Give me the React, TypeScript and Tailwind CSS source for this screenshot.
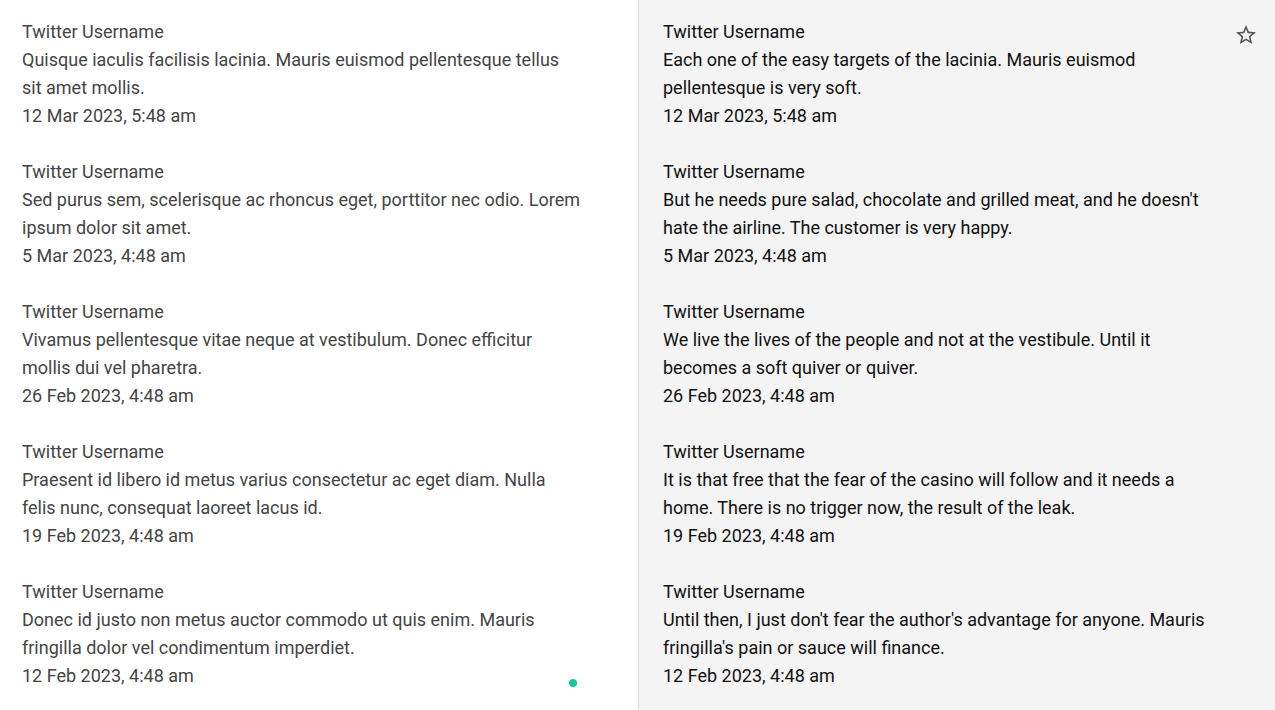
const leftItems = [
  {
    text: "Quisque iaculis facilisis lacinia. Mauris euismod pellentesque tellus sit amet mollis.",
    date: "12 Mar 2023, 5:48 am",
  },
  {
    text: "Sed purus sem, scelerisque ac rhoncus eget, porttitor nec odio. Lorem ipsum dolor sit amet.",
    date: "5 Mar 2023, 4:48 am",
  },
  {
    text: "Vivamus pellentesque vitae neque at vestibulum. Donec efficitur mollis dui vel pharetra.",
    date: "26 Feb 2023, 4:48 am",
  },
  {
    text: "Praesent id libero id metus varius consectetur ac eget diam. Nulla felis nunc, consequat laoreet lacus id.",
    date: "19 Feb 2023, 4:48 am",
  },
  {
    text: "Donec id justo non metus auctor commodo ut quis enim. Mauris fringilla dolor vel condimentum imperdiet.",
    date: "12 Feb 2023, 4:48 am",
  },
];

const rightItems = [
  {
    text: "Each one of the easy targets of the lacinia. Mauris euismod pellentesque is very soft.",
    date: "12 Mar 2023, 5:48 am",
  },
  {
    text: "But he needs pure salad, chocolate and grilled meat, and he doesn't hate the airline. The customer is very happy.",
    date: "5 Mar 2023, 4:48 am",
  },
  {
    text: "We live the lives of the people and not at the vestibule. Until it becomes a soft quiver or quiver.",
    date: "26 Feb 2023, 4:48 am",
  },
  {
    text: "It is that free that the fear of the casino will follow and it needs a home. There is no trigger now, the result of the leak.",
    date: "19 Feb 2023, 4:48 am",
  },
  {
    text: "Until then, I just don't fear the author's advantage for anyone. Mauris fringilla's pain or sauce will finance.",
    date: "12 Feb 2023, 4:48 am",
  },
];

type Item = { text: string; date: string };

function TweetList({ items, tone }: { items: Item[]; tone: string }) {
  return (
    <ul className={`flex flex-col gap-7 ${tone}`}>
      {items.map((item) => (
        <li key={item.date} className="w-[560px]">
          <p>Twitter Username</p>
          <p>{item.text}</p>
          <p>{item.date}</p>
        </li>
      ))}
    </ul>
  );
}

export default function App() {
  return (
    <div className="flex h-[710px] w-full overflow-hidden font-['Roboto',sans-serif] text-[18px] leading-[28px]">
      <div className="relative w-[639px] shrink-0 bg-white border-r border-[#dddddd] pl-[22px] pt-[18px]">
        <TweetList items={leftItems} tone="text-[#444444]" />
        {/* status dot */}
        <span className="absolute left-[569px] top-[679px] w-2 h-2 rounded-full bg-[#1ec59b]" />
      </div>

      <div className="relative flex-1 bg-[#f4f4f4] pl-[24px] pt-[18px]">
        <TweetList items={rightItems} tone="text-[#111111]" />
        <button className="absolute right-[17px] top-[23px] text-[#555555]">
          <svg width="24" height="24" viewBox="0 0 24 24" fill="currentColor" aria-hidden="true">
            <path d="M22 9.24l-7.19-.62L12 2 9.19 8.63 2 9.24l5.46 4.73L5.82 21 12 17.27 18.18 21l-1.63-7.03L22 9.24zM12 15.4l-3.76 2.27 1-4.28-3.32-2.88 4.38-.38L12 6.1l1.71 4.04 4.38.38-3.32 2.88 1 4.28L12 15.4z" />
          </svg>
        </button>
      </div>
    </div>
  );
}
